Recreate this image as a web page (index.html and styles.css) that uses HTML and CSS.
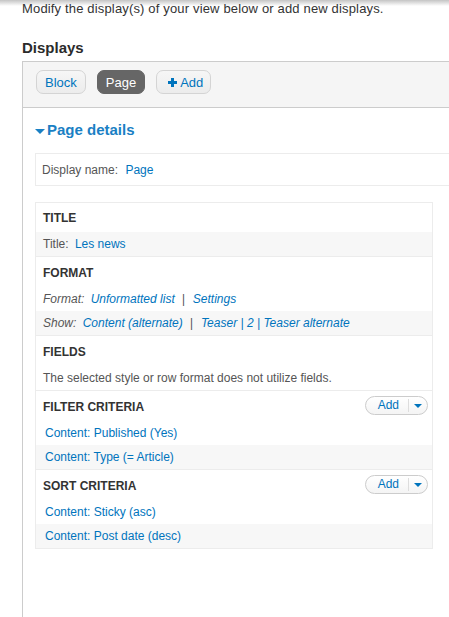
FILE: index.html
```html
<!DOCTYPE html>
<html>
<head>
<meta charset="utf-8">
<title>Views displays</title>
<link rel="stylesheet" href="styles.css">
</head>
<body>
<div class="page">
  <p class="intro">Modify the display(s) of your view below or add new displays.</p>
  <h2 class="displays-title">Displays</h2>
  <div class="displays-box">
    <div class="tabs">
      <a class="tab">Block</a>
      <a class="tab tab-active">Page</a>
      <a class="tab tab-add"><svg class="plus" width="9" height="9" viewBox="0 0 9 9"><rect x="3" y="0" width="3" height="9" fill="#0074bd"/><rect x="0" y="3" width="9" height="3" fill="#0074bd"/></svg>Add</a>
    </div>
    <div class="details">
      <div class="details-title"><span class="caret"></span>Page details</div>
      <div class="display-name"><span class="label">Display name:</span> <a class="link">Page</a></div>
      <div class="columns">
        <div class="column">
          <div class="section">
            <div class="section-head"><span class="head-text">Title</span></div>
            <div class="row even"><span class="label">Title:</span> <a class="link">Les news</a></div>
          </div>
          <div class="section">
            <div class="section-head"><span class="head-text">Format</span></div>
            <div class="row italic"><span class="label">Format:</span> <a class="link">Unformatted list</a><span class="sep">|</span><a class="link">Settings</a></div>
            <div class="row even italic"><span class="label">Show:</span> <a class="link">Content (alternate)</a><span class="sep">|</span><a class="link">Teaser | 2 | Teaser alternate</a></div>
          </div>
          <div class="section">
            <div class="section-head"><span class="head-text">Fields</span></div>
            <div class="row plain">The selected style or row format does not utilize fields.</div>
          </div>
          <div class="section">
            <div class="section-head"><span class="head-text">Filter criteria</span>
              <span class="pill"><a class="pill-main">Add</a><span class="pill-toggle"><span class="arrow"></span></span></span>
            </div>
            <div class="row item"><a class="link">Content: Published (Yes)</a></div>
            <div class="row item even"><a class="link">Content: Type (= Article)</a></div>
          </div>
          <div class="section">
            <div class="section-head"><span class="head-text">Sort criteria</span>
              <span class="pill"><a class="pill-main">Add</a><span class="pill-toggle"><span class="arrow"></span></span></span>
            </div>
            <div class="row item"><a class="link">Content: Sticky (asc)</a></div>
            <div class="row item even"><a class="link">Content: Post date (desc)</a></div>
          </div>
        </div>
      </div>
    </div>
  </div>
</div>
</body>
</html>
```
FILE: styles.css
```css
html, body {
  overflow: hidden;
  height: 100%;
}
body {
  margin: 0;
  font-family: "Liberation Sans", Arial, sans-serif;
  color: #333;
  background: #fff linear-gradient(to bottom, #c4c4c4 0, #fff 6px) no-repeat;
}
.page {
  padding-left: 22px;
  width: 1200px;
}
.intro {
  margin: 0;
  font-size: 13px;
  line-height: 18px;
  letter-spacing: 0.16px;
  color: #333;
}
.displays-title {
  margin: 21px 0 4px;
  font-size: 15px;
  line-height: 18px;
  font-weight: bold;
  color: #2b2b2b;
}
.displays-box {
  border-left: 1px solid #ccc;
  border-top: 1px solid #ccc;
  height: 700px;
}
.tabs {
  display: flex;
  gap: 11px;
  padding: 8px 13px 13px;
  background: #f5f5f5;
  border-bottom: 1px solid #ccc;
}
.tab {
  display: inline-flex;
  align-items: center;
  height: 24px;
  box-sizing: border-box;
  padding: 0 8px;
  font-size: 13px;
  color: #0074bd;
  background: linear-gradient(to bottom, #f6f6f6, #ececec);
  border: 1px solid #d4d4d4;
  border-radius: 7px;
}
.tab-active {
  background: #666;
  border-color: #666;
  color: #fff;
}
.tab-add {
  padding: 0 7px 0 11px;
}
.plus {
  margin-right: 3px;
}
.details {
  padding: 12px 0 0 12px;
}
.details-title {
  display: flex;
  align-items: center;
  font-size: 15px;
  line-height: 20px;
  font-weight: bold;
  color: #1a80c4;
}
.caret {
  width: 0;
  height: 0;
  border-left: 5px solid transparent;
  border-right: 5px solid transparent;
  border-top: 5px solid #1a80c4;
  margin: 2px 2px 0 0;
}
.display-name {
  margin-top: 13px;
  border: 1px solid #ececec;
  padding: 7px 6px 6px;
  font-size: 12px;
  line-height: 18px;
  color: #555;
}
.display-name .label {
  margin-right: 4px;
}
.link {
  color: #0074bd;
}
.columns {
  display: flex;
  margin-top: 16px;
}
.column {
  width: 398px;
  box-sizing: border-box;
  border: 1px solid #ececec;
}
.section + .section {
  border-top: 1px solid #ececec;
  padding-top: 1px;
}
.section-head {
  display: flex;
  align-items: center;
  justify-content: space-between;
  height: 29px;
  box-sizing: border-box;
  padding: 1px 4px 0 7px;
}
.head-text {
  font-size: 12px;
  font-weight: bold;
  text-transform: uppercase;
  color: #333;
}
.row {
  height: 24px;
  line-height: 24px;
  padding-left: 7px;
  font-size: 12px;
  color: #555;
  white-space: nowrap;
}
.row.even {
  background: #f7f7f7;
}
.row.item {
  padding-left: 9px;
}
.row .label {
  margin-right: 3px;
}
.italic {
  font-style: italic;
}
.sep {
  margin: 0 8px 0 7px;
  color: #555;
}
.pill {
  align-self: flex-start;
  margin-top: 3px;
  display: inline-flex;
  align-items: center;
  height: 19px;
  box-sizing: border-box;
  border: 1px solid #ccc;
  border-radius: 10px;
  background: linear-gradient(to bottom, #fff, #f4f4f4);
}
.pill-main {
  padding: 0 9px 0 12px;
  font-size: 12px;
  line-height: 17px;
  color: #0074bd;
}
.pill-toggle {
  display: flex;
  align-items: center;
  justify-content: center;
  width: 18px;
  height: 13px;
  border-left: 1px solid #ddd;
}
.arrow {
  width: 0;
  height: 0;
  border-left: 4px solid transparent;
  border-right: 4px solid transparent;
  border-top: 4px solid #0074bd;
}
```
